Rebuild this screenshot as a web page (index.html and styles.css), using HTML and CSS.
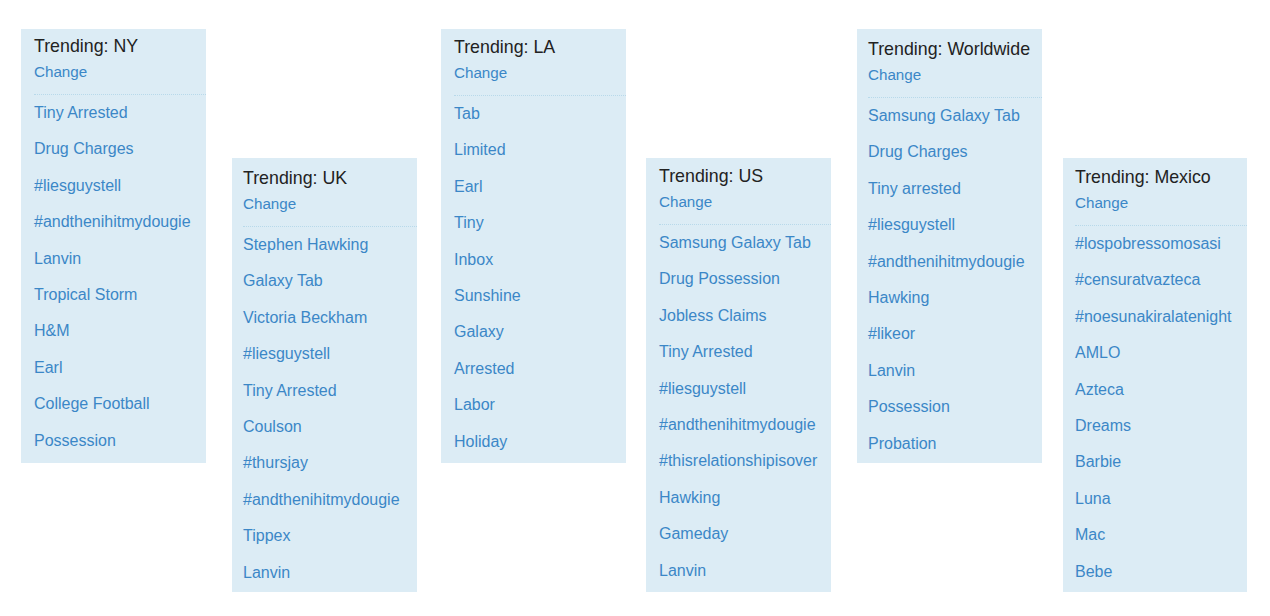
FILE: index.html
```html
<!DOCTYPE html>
<html>
<head>
<meta charset="utf-8">
<link rel="stylesheet" href="styles.css">
</head>
<body>
<div class="board">
  <section class="panel p-ny">
    <h2 class="title">Trending: NY</h2>
    <a class="change">Change</a>
    <ul class="trends">
      <li>Tiny Arrested</li><li>Drug Charges</li><li>#liesguystell</li><li>#andthenihitmydougie</li><li>Lanvin</li><li>Tropical Storm</li><li>H&amp;M</li><li>Earl</li><li>College Football</li><li>Possession</li>
    </ul>
  </section>
  <section class="panel low p-uk">
    <h2 class="title">Trending: UK</h2>
    <a class="change">Change</a>
    <ul class="trends">
      <li>Stephen Hawking</li><li>Galaxy Tab</li><li>Victoria Beckham</li><li>#liesguystell</li><li>Tiny Arrested</li><li>Coulson</li><li>#thursjay</li><li>#andthenihitmydougie</li><li>Tippex</li><li>Lanvin</li>
    </ul>
  </section>
  <section class="panel p-la">
    <h2 class="title">Trending: LA</h2>
    <a class="change">Change</a>
    <ul class="trends">
      <li>Tab</li><li>Limited</li><li>Earl</li><li>Tiny</li><li>Inbox</li><li>Sunshine</li><li>Galaxy</li><li>Arrested</li><li>Labor</li><li>Holiday</li>
    </ul>
  </section>
  <section class="panel low p-us">
    <h2 class="title">Trending: US</h2>
    <a class="change">Change</a>
    <ul class="trends">
      <li>Samsung Galaxy Tab</li><li>Drug Possession</li><li>Jobless Claims</li><li>Tiny Arrested</li><li>#liesguystell</li><li>#andthenihitmydougie</li><li>#thisrelationshipisover</li><li>Hawking</li><li>Gameday</li><li>Lanvin</li>
    </ul>
  </section>
  <section class="panel p-ww">
    <h2 class="title">Trending: Worldwide</h2>
    <a class="change">Change</a>
    <ul class="trends">
      <li>Samsung Galaxy Tab</li><li>Drug Charges</li><li>Tiny arrested</li><li>#liesguystell</li><li>#andthenihitmydougie</li><li>Hawking</li><li>#likeor</li><li>Lanvin</li><li>Possession</li><li>Probation</li>
    </ul>
  </section>
  <section class="panel low p-mx">
    <h2 class="title">Trending: Mexico</h2>
    <a class="change">Change</a>
    <ul class="trends">
      <li>#lospobressomosasi</li><li>#censuratvazteca</li><li>#noesunakiralatenight</li><li>AMLO</li><li>Azteca</li><li>Dreams</li><li>Barbie</li><li>Luna</li><li>Mac</li><li>Bebe</li>
    </ul>
  </section>
</div>
</body>
</html>
```

FILE: styles.css
```css
html, body {
  margin: 0;
  padding: 0;
  background: #ffffff;
}
body {
  font-family: "Liberation Sans", Arial, sans-serif;
  width: 1270px;
  height: 616px;
  overflow: hidden;
}
.board {
  display: flex;
  align-items: flex-start;
  padding: 29px 0 0 21px;
}
.panel {
  box-sizing: border-box;
  width: 185px;
  height: 434px;
  background: #dcecf5;
  padding: 7px 0 0 13px;
  display: flex;
  flex-direction: column;
}
.low { margin-top: 129px; }

.p-uk { margin-left: 26px; padding-top: 10px; padding-left: 11px; }
.p-la { margin-left: 24px; padding-top: 8px; }
.p-us { margin-left: 20px; padding-top: 8px; }
.p-ww { margin-left: 26px; padding-top: 10px; padding-left: 11px; }
.p-mx { margin-left: 21px; width: 184px; padding-top: 9px; padding-left: 12px; }

.title {
  margin: 0;
  font-size: 17.8px;
  font-weight: normal;
  line-height: 20px;
  color: #222222;
}
.change {
  display: block;
  margin-top: 6px;
  font-size: 15.2px;
  line-height: 20px;
  color: #3b87c7;
}
.trends {
  list-style: none;
  margin: 12px 0 0 0;
  padding: 0;
  border-top: 1px dotted #b8d9ea;
}
.trends li {
  font-size: 16px;
  line-height: 36.4px;
  height: 36.4px;
  color: #3b87c7;
  white-space: nowrap;
}
```
